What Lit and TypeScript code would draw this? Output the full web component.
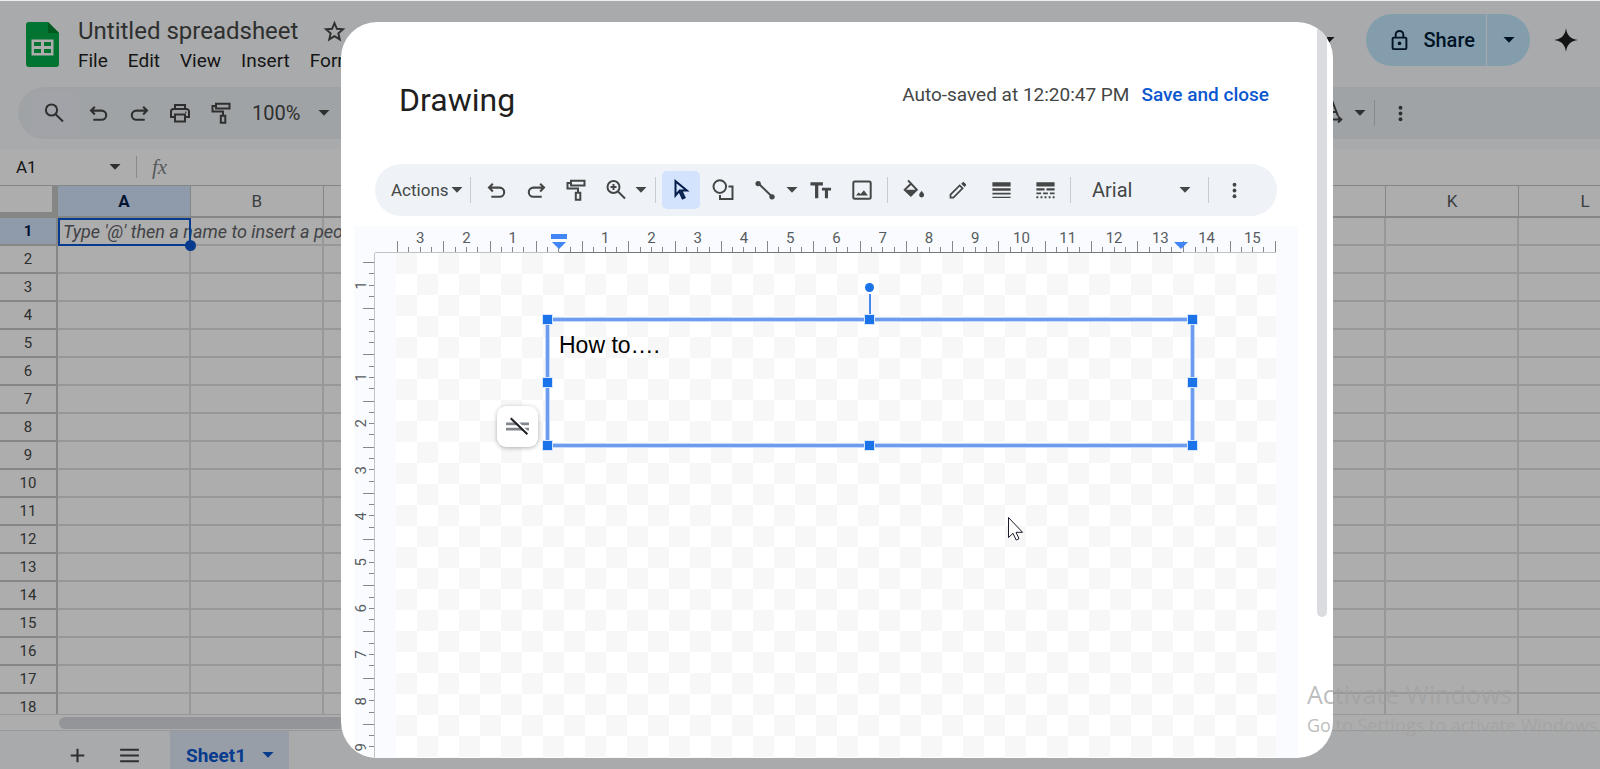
import { LitElement, html, css, svg, nothing } from "lit";
import { customElement } from "lit/decorators.js";

const glyphs: Record<string, unknown> = {
  search: svg`<circle cx="9.5" cy="9" r="5.6"/><path d="M13.6 13.2 21 20.5"/>`,
  undo: svg`<path d="M8.5 5.5 4.8 9.2l3.7 3.7M5 9.2h10a4 4 0 0 1 0 8.8H7"/>`,
  redo: svg`<path d="M15.5 5.5l3.7 3.7-3.7 3.7M19 9.2H9a4 4 0 0 0 0 8.8h8"/>`,
  print: svg`<path d="M7 8V4h10v4M7 16H3v-5.500a2.500 2.500 0 0 1 2.500-2.500h13a2.500 2.500 0 0 1 2.500 2.500V16h-4M7 13.500h10V20.500H7z"/><circle class="solid" cx="17.800" cy="11.200" r=".8"/>`,
  paint: svg`<path d="M7 2.800h13.500v4.700H7zM7 5H3.500v5.500h10.500v4M11.800 14.800h4.500v7h-4.500z"/>`,
  zoom: svg`<circle cx="9.500" cy="9" r="6"/><path d="M14 13.500l7 7M9.500 6v6M6.500 9h6"/>`,
  pointer: svg`<path d="M6.500 3.200v14.300l3.700-4.300 3.400 7.300 2-1-3.400-7.100h5.600z"/>`,
  shapes: svg`<circle cx="8.800" cy="8.600" r="6.300"/><path d="M17.500 8.500h4v12.500H9v-4"/>`,
  line: svg`<path d="M4.500 4.500l14.500 14"/><circle class="solid" cx="4.300" cy="4.800" r="2.800"/><circle class="solid" cx="18.800" cy="18.600" r="2.800"/>`,
  textbox: svg`<path class="solid" d="M1.500 3.500h13v3.200H9.700V20H6.300V6.700H1.500zM13.500 9h9.500v3h-3.200v8h-3.200v-8h-3.100z"/>`,
  image: svg`<rect x="3.300" y="3.600" width="17.400" height="17.200" rx="1.500"/><path class="solid" d="M6 17.500l2.500-3 2.200 1.600 3.200-3.800 4 5.200z"/>`,
  fill: svg`<path d="M6.300 1.500l9.200 9.700-6.300 6.300-6.400-6.300 6.300-6"/><path class="solid" d="M3 11.200h12.200l-6 6zM20.500 12.500s-2.600 2.600-2.600 4.300a2.600 2.600 0 0 0 5.200 0c0-1.700-2.600-4.300-2.600-4.300z"/>`,
  pencil: svg`<path d="M4 20v-3.300L14.500 6.200l3.300 3.300L7.300 20z"/><path class="solid" d="M16.200 4.300l1.600-1.500c.6-.5 1.300-.5 1.800 0l1.900 1.900c.5.500.5 1.200 0 1.800l-1.500 1.500z"/>`,
  weight: svg`<path class="solid" d="M2.500 3.500h19v4.300h-19zM2.500 9.600h19v2.700h-19zM2.500 14.300h19v2h-19zM2.500 18.500h19v1.200h-19z"/>`,
  dash: svg`<path class="solid" d="M2.500 3.500h19v4.300h-19zM2.500 9.600h8.500v2.500H2.500zM13 9.600h8.500v2.500H13zM2.500 14h5v2h-5zM9.500 14h5v2h-5zM16.500 14h5v2h-5zM2.500 18h2v2h-2zM6.800 18h2v2h-2zM11 18h2v2h-2zM15.300 18h2v2h-2zM19.500 18h2v2h-2z"/>`,
  more: svg`<circle class="solid" cx="12" cy="6" r="2"/><circle class="solid" cx="12" cy="12" r="2"/><circle class="solid" cx="12" cy="18" r="2"/>`,
  caret: svg`<path class="solid" d="M6.500 9h11L12 14.800z"/>`,
  star: svg`<path d="M12 3.200l2.500 6 6.400.5-4.900 4.200 1.500 6.300-5.500-3.400-5.500 3.400L8 13.900 3.100 9.700l6.400-.5z"/>`,
  lock: svg`<rect x="4.800" y="9" width="14.400" height="12" rx="1.200"/><path d="M8 9V6a4 4 0 0 1 8 0v3"/><circle class="solid" cx="12" cy="15" r="1.900"/>`,
  spark: svg`<path class="solid" d="M12 0c1 7.500 4.500 11 12 12-7.500 1-11 4.500-12 12-1-7.500-4.500-11-12-12 7.500-1 11-4.500 12-12z"/>`,
  rotate: svg`<path d="M6.500 15 12 2l5 13M8 11h8M3 18.500h17M17 15.500l3.300 3-3.300 3"/>`,
  plus: svg`<path d="M12 5.500v13M5.500 12h13"/>`,
  lines: svg`<path d="M3 6.500h18M3 12h18M3 17.500h18"/>`,
  nofit: svg`<path class="soft" d="M1 9.500h22M1 14.500h22"/><path class="gap" d="M8 3.500l14.500 15"/><path d="M5.500 4l16 15.500"/>`,
};

const icon = (name: string, size = 24) => html`<svg
  class="icon"
  viewBox="0 0 24 24"
  width=${size}
  height=${size}
  aria-hidden="true"
>${glyphs[name]}</svg>`;

const iconStyles = css`
  * { box-sizing: border-box; }
  .icon { display: block; flex: none; fill: none; stroke: currentColor; stroke-width: 2; }
  .solid { fill: currentColor; stroke: none; }
  button, input, select { font: inherit; color: inherit; border: 0; background: none; padding: 0; margin: 0; outline: 0; }
  .tool { display: flex; align-items: center; justify-content: center; width: 38px; height: 38px; border-radius: 5px; }
  .drop { display: flex; align-items: center; justify-content: center; width: 16px; height: 38px; }
  .rule { width: 1px; height: 26px; background: #c7cace; margin: 0 6px; flex: none; }
`;

@customElement("sheet-page")
class SheetPage extends LitElement {
  static styles = [iconStyles, css`
    :host { display: flex; flex-direction: column; height: 100%; overflow: hidden; background: #f9fbfd; color: #1f1f1f; font-family: Roboto, sans-serif; }
    .top { display: flex; height: 86px; flex: none; padding: 0 22px 0 26px; }
    .logo { margin-top: 21px; flex: none; }
    .names { display: flex; flex-direction: column; margin: 13px 0 0 19px; }
    .title-row { display: flex; align-items: center; height: 34px; gap: 10px; color: #444746; }
    .title { width: 235px; font-size: 24px; }
    .menus { display: flex; gap: 20px; font-size: 19px; line-height: 26px; }
    .actions { display: flex; align-items: center; height: 52px; margin: 13px 0 0 auto; }
    .share { display: flex; height: 52px; margin: 0 24px 0 29px; color: #001d35; font-size: 20px; font-weight: 500; }
    .share-main { display: flex; align-items: center; gap: 12px; padding: 0 11px 0 22px; background: #c2e7ff; border-radius: 26px 0 0 26px; }
    .share-more { display: flex; align-items: center; justify-content: center; width: 43px; margin-left: 1px; background: #c2e7ff; border-radius: 0 26px 26px 0; }
    .bar { display: flex; align-items: center; height: 52px; flex: none; margin-left: 18px; padding: 0 181px 0 12px; background: #ecf1f5; border-radius: 26px 0 0 26px; color: #444746; }
    .find { width: 48px; height: 44px; background: #eef0fa; }
    .set { display: flex; gap: 3px; margin-left: 1px; }
    .zoom { width: 76px; padding-left: 12px; font-size: 20px; }
    .end { display: flex; align-items: center; margin-left: auto; }
    .formula { display: flex; align-items: center; height: 36px; flex: none; margin-top: 10px; background: #fff; color: #444746; }
    .name { width: 107px; padding-left: 16px; font-size: 17px; color: #1f1f1f; }
    .formula .rule { height: 22px; margin: 0 15px 0 13px; }
    .fx { font: italic 21px "Liberation Serif", serif; color: #80868b; }
    .grid { flex: 1; min-height: 0; overflow: hidden; background: #fff; border-top: 1px solid #c4c7c5; }
    table { border-collapse: separate; border-spacing: 0; table-layout: fixed; width: 1652px; }
    col.nums { width: 58px; }
    th, td { padding: 0; font-weight: 400; height: 28px; overflow: visible; white-space: nowrap; }
    thead th { height: 32px; border-right: 1px solid #c4c7c5; border-bottom: 2px solid #c4c7c5; font-size: 17px; color: #575b5f; }
    tbody th { border-right: 2px solid #c4c7c5; border-bottom: 2px solid #c4c7c5; font-size: 15px; color: #444746; }
    td { border-right: 2px solid #e0e0e0; border-bottom: 2px solid #e0e0e0; }
    thead .corner { border-right: 6px solid #c4c7c5; border-bottom: 6px solid #c4c7c5; }
    thead .on, tbody .on { background: #d3e3fd; color: #041e49; font-weight: 700; }
    .picked { position: relative; }
    .hint { display: block; width: 132px; padding: 2px 0 0 5px; font: italic 18px/24px Roboto, sans-serif; color: #5f6368; }
    .frame { position: absolute; inset: 0 -2px -2px 0; border: 2px solid #0b57d0; }
    .frame::after { content: ""; position: absolute; right: -7px; bottom: -7px; width: 11px; height: 11px; border-radius: 50%; background: #0b57d0; }
    .scroll { display: flex; align-items: center; height: 17px; flex: none; padding-left: 59px; background: #fff; border-top: 1px solid #e0e0e0; border-bottom: 1px solid #e0e0e0; }
    .thumb { width: 820px; height: 12px; border-radius: 6px; background: #dadce0; }
    .tabs { display: flex; align-items: center; height: 38px; flex: none; padding-left: 58px; background: #f9fbfd; color: #444746; }
    .tabs .tool { margin-top: 10px; }
    .tabs .tool + .tool { margin-left: 14px; }
    .sheet { display: flex; align-items: center; gap: 10px; height: 38px; margin-left: 22px; padding: 10px 9px 0 16px; background: #e1e9f7; color: #0b57d0; font-size: 19px; font-weight: 700; }
  `];

  render() {
    const cols = [..."ABCDEFGHIJKL"];
    return html`
      <header class="top">
        <svg class="logo" width="33" height="45" viewBox="0 0 33 45" aria-hidden="true">
          <path fill="#00ac47" d="M3 0h19l11 11v31a3 3 0 0 1-3 3H3a3 3 0 0 1-3-3V3a3 3 0 0 1 3-3z"/>
          <path fill="#00832d" d="M22 0l11 11H22z"/>
          <path fill="#fff" fill-rule="evenodd" d="M5.500 17.500h22v16h-22zM8 20v4h7v-4zM18 20v4h7v-4zM8 27v4h7v-4zM18 27v4h7v-4z"/>
        </svg>
        <div class="names">
          <div class="title-row">
            <input class="title" aria-label="Document title" .value=${"Untitled spreadsheet"} />
            <button aria-label="Star">${icon("star", 23)}</button>
          </div>
          <nav class="menus">
            ${["File", "Edit", "View", "Insert", "Format"].map((m) => html`<button>${m}</button>`)}
          </nav>
        </div>
        <div class="actions">
          <button class="drop" aria-label="Call options">${icon("caret")}</button>
          <div class="share">
            <button class="share-main">${icon("lock", 23)}Share</button>
            <button class="share-more" aria-label="Share options">${icon("caret")}</button>
          </div>
          <button aria-label="Assistant">${icon("spark", 24)}</button>
        </div>
      </header>
      <div class="bar">
        <button class="tool find" aria-label="Search the menus">${icon("search", 24)}</button>
        <div class="set">
          <button class="tool" aria-label="Undo">${icon("undo", 25)}</button>
          <button class="tool" aria-label="Redo">${icon("redo", 25)}</button>
          <button class="tool" aria-label="Print">${icon("print", 24)}</button>
          <button class="tool" aria-label="Paint format">${icon("paint", 24)}</button>
        </div>
        <input class="zoom" aria-label="Zoom" .value=${"100%"} />
        <button class="drop" aria-label="Zoom options">${icon("caret")}</button>
        <div class="end">
          <button class="tool" aria-label="Text rotation">${icon("rotate", 24)}</button>
          <button class="drop" aria-label="Rotation options">${icon("caret")}</button>
          <span class="rule"></span>
          <button class="tool" aria-label="More">${icon("more", 23)}</button>
        </div>
      </div>
      <div class="formula">
        <input class="name" aria-label="Name box" .value=${"A1"} />
        <button class="drop" aria-label="Named ranges">${icon("caret")}</button>
        <span class="rule"></span>
        <span class="fx">fx</span>
      </div>
      <div class="grid">
        <table>
          <colgroup><col class="nums" />${cols.map(() => html`<col />`)}</colgroup>
          <thead>
            <tr>
              <th class="corner"></th>
              ${cols.map((c, i) => html`<th class=${i ? "" : "on"}>${c}</th>`)}
            </tr>
          </thead>
          <tbody>
            ${Array.from({ length: 18 }, (_, r) => html`<tr>
              <th class=${r ? "" : "on"}>${r + 1}</th>
              ${cols.map((_, c) => r === 0 && c === 0
                ? html`<td class="picked"><span class="hint">Type '@' then a name to insert a people smart chip</span><span class="frame"></span></td>`
                : html`<td></td>`)}
            </tr>`)}
          </tbody>
        </table>
      </div>
      <div class="scroll"><div class="thumb"></div></div>
      <footer class="tabs">
        <button class="tool" aria-label="Add sheet">${icon("plus", 25)}</button>
        <button class="tool" aria-label="All sheets">${icon("lines", 25)}</button>
        <button class="sheet">Sheet1 ${icon("caret")}</button>
      </footer>
    `;
  }
}

@customElement("drawing-dialog")
class DrawingDialog extends LitElement {
  static styles = [iconStyles, css`
    :host { display: flex; height: 100%; overflow: hidden; background: #fff; border-radius: 36px; color: #444746; font-family: Roboto, sans-serif; }
    .main { flex: 1; min-width: 0; display: flex; flex-direction: column; padding-left: 13px; }
    .head { display: flex; justify-content: space-between; align-items: flex-start; height: 142px; flex: none; padding: 0 29px 0 45px; }
    h1 { margin: 58px 0 0; font-size: 32px; line-height: 40px; font-weight: 400; color: #1f1f1f; }
    .status { display: flex; gap: 12px; margin-top: 60px; font-size: 19px; line-height: 26px; }
    .save { color: #0b57d0; font-weight: 500; }
    .bar { display: flex; align-items: center; height: 52px; flex: none; margin: 0 21px; padding-left: 16px; background: #eff3f8; border-radius: 26px; }
    .menu { display: flex; align-items: center; width: 73px; font-size: 17px; }
    .set { display: flex; }
    .set .drop { margin-left: -4px; }
    .g1 { gap: 2px; }
    .g2 { gap: 4px; }
    .g2 .drop { margin-right: -3px; }
    .g3 { gap: 6px; }
    .active { background: #d3e3fd; color: #041e49; }
    .font { position: relative; display: flex; align-items: center; width: 125px; }
    .font select { appearance: none; width: 100%; height: 38px; padding-left: 15px; font-size: 20px; }
    .font .icon { position: absolute; right: 5px; pointer-events: none; }
    .work { flex: 1; min-height: 0; display: grid; grid-template: 27px 1fr / 21px 1fr; margin-top: 10px; background: #f9fbfe; overflow: hidden; }
    .across { grid-column: 2; position: relative; display: grid; grid-auto-flow: column; grid-auto-columns: 1fr; padding-left: 22px; margin-right: 22px; border-bottom: 1px solid #c0c3c6; font-size: 15px; line-height: 16px; color: #575b5f; }
    .h { text-align: center; padding-top: 4px; background:
      linear-gradient(#85888b, #85888b) 0 100% / 1px 11px no-repeat,
      linear-gradient(#85888b, #85888b) 25% 100% / 1px 5px no-repeat,
      linear-gradient(#85888b, #85888b) 50% 100% / 1px 5px no-repeat,
      linear-gradient(#85888b, #85888b) 75% 100% / 1px 5px no-repeat; }
    .h:nth-child(19) { border-right: 1px solid #85888b; border-image: linear-gradient(transparent 15px, #85888b 0) 1; }
    .span { position: absolute; left: 184px; right: 95px; bottom: -1px; height: 1px; background: #757779; }
    .mark { position: absolute; bottom: 3px; display: block; }
    .left { left: 176px; }
    .right { right: 87px; }
    .down { grid-row: 2; grid-column: 1; display: grid; grid-auto-rows: 1fr; height: 517px; padding-top: 9px; border-right: 1px solid #c0c3c6; font-size: 15px; color: #575b5f; }
    .v { display: flex; align-items: center; background:
      linear-gradient(#85888b, #85888b) 100% 0 / 11px 1px no-repeat,
      linear-gradient(#85888b, #85888b) 100% 25% / 5px 1px no-repeat,
      linear-gradient(#85888b, #85888b) 100% 50% / 5px 1px no-repeat,
      linear-gradient(#85888b, #85888b) 100% 75% / 5px 1px no-repeat; }
    .v span { writing-mode: vertical-rl; transform: rotate(180deg); line-height: 14px; }
    .stage { grid-row: 2; grid-column: 2; position: relative; margin: 0 22px 0 21px; background: repeating-conic-gradient(#fff 0 25%, #f7f7f7 0 50%) 0 0 / 42px 42px; overflow: hidden; }
    .box { position: absolute; left: 149px; top: 64px; right: 81px; height: 131px; border: 5px solid #c5d9fb; padding: 9px; color: #000; font: 23px/28px "Liberation Sans", Arial, sans-serif; }
    .box::before { content: ""; position: absolute; inset: -4px; border: 3px solid #6b9cf0; }
    .grip { position: absolute; width: 11px; height: 11px; margin: -6px; background: #1a73e8; border: 1px solid #d6e4fc; }
    .t { top: -2px; } .m { top: 50%; } .b { top: calc(100% + 3px); }
    .l { left: -2px; } .c { left: 50%; } .r { left: calc(100% + 3px); }
    .stem { position: absolute; left: 50%; top: -28px; width: 2px; height: 20px; margin-left: -1px; background: #4a87ee; }
    .turn { position: absolute; left: 50%; top: -39px; width: 9px; height: 9px; margin-left: -5px; border-radius: 50%; background: #1a73e8; }
    .fit { position: absolute; left: 101px; top: 153px; width: 41px; height: 41px; display: flex; align-items: center; justify-content: center; background: #fff; border-radius: 9px; box-shadow: 0 1px 4px rgba(60, 64, 67, .4); color: #202124; }
    .soft { stroke: #80868b; stroke-width: 2.500; }
    .gap { stroke: #fff; }
    .cursor { position: absolute; left: 611px; top: 263px; }
    .rail { flex: none; width: 35px; padding: 6px 0 0 19px; }
    .thumb { width: 10px; height: 589px; background: #dadce0; border-radius: 0 0 5px 5px; }
  `];

  tool(name: string, label: string, size = 24, extra = "") {
    return html`<button class="tool ${extra}" aria-label=${label}>${icon(name, size)}</button>`;
  }

  render() {
    const across = Array.from({ length: 19 }, (_, i) => Math.abs(i - 3));
    const down = Array.from({ length: 11 }, (_, i) => Math.abs(i - 1));
    const drop = (label: string) => html`<button class="drop" aria-label=${label}>${icon("caret")}</button>`;
    return html`
      <div class="main">
        <div class="head">
          <h1>Drawing</h1>
          <div class="status"><span>Auto-saved at 12:20:47 PM</span><button class="save">Save and close</button></div>
        </div>
        <div class="bar">
          <button class="menu">Actions<svg class="icon" width="16" height="24" viewBox="4 0 16 24">${glyphs.caret}</svg></button>
          <span class="rule"></span>
          <div class="set g1">
            ${this.tool("undo", "Undo", 25)}${this.tool("redo", "Redo", 25)}${this.tool("paint", "Paint format")}${this.tool("zoom", "Zoom")}${drop("Zoom options")}
          </div>
          <span class="rule"></span>
          <div class="set g2">
            ${this.tool("pointer", "Select", 24, "active")}${this.tool("shapes", "Shape")}${this.tool("line", "Line", 23)}${drop("Line options")}${this.tool("textbox", "Text box", 23)}${this.tool("image", "Image", 24)}
          </div>
          <span class="rule"></span>
          <div class="set g3">
            ${this.tool("fill", "Fill color", 23)}${this.tool("pencil", "Border color", 21)}${this.tool("weight", "Border weight", 23)}${this.tool("dash", "Border dash", 23)}
          </div>
          <span class="rule"></span>
          <label class="font"><select aria-label="Font"><option>Arial</option></select>${icon("caret")}</label>
          <span class="rule"></span>
          ${this.tool("more", "More", 23)}
        </div>
        <div class="work">
          <div class="across">
            ${across.map((n) => html`<div class="h">${n || nothing}</div>`)}
            <span class="span"></span>
            <svg class="mark left" width="16" height="15" viewBox="0 0 16 15"><path fill="#4285f4" d="M0 0h16v5H0zM1 8h14l-7 7z"/></svg>
            <svg class="mark right" width="16" height="15" viewBox="0 0 16 15"><path fill="#4285f4" d="M1 8h14l-7 7z"/></svg>
          </div>
          <div class="down">${down.map((n) => html`<div class="v"><span>${n || nothing}</span></div>`)}</div>
          <div class="stage">
            <div class="box">
              How to….
              <span class="stem"></span><span class="turn"></span>
              ${["t l", "t c", "t r", "m l", "m r", "b l", "b c", "b r"].map((p) => html`<span class="grip ${p}"></span>`)}
            </div>
            <button class="fit" aria-label="Do not autofit">${icon("nofit", 25)}</button>
            <svg class="cursor" width="18" height="26" viewBox="0 0 18 26"><path fill="#fff" stroke="#1b1b2b" d="M1.500 1.500v20l4.500-4.200 3.200 6.700 2.800-1.300L9 16.300h6.500z"/></svg>
          </div>
        </div>
      </div>
      <div class="rail"><div class="thumb"></div></div>
    `;
  }
}

@customElement("app-root")
class AppRoot extends LitElement {
  static styles = css`
    :host { display: block; position: relative; height: 100vh; overflow: hidden; box-sizing: border-box; border-top: 1px solid #eeeef2; }
    .shade { position: absolute; inset: 0; box-sizing: border-box; padding: 21px 267px 11px 341px; background: rgba(0, 0, 0, .32); }
    .notice { position: absolute; left: calc(100% - 293px); bottom: 30px; white-space: nowrap; font-family: "Open Sans", "Noto Sans", sans-serif; color: rgba(160, 160, 160, .7); font-size: 18px; line-height: 28px; pointer-events: none; }
    .notice strong { display: block; font-size: 25px; line-height: 34px; font-weight: 400; }
  `;

  render() {
    return html`
      <sheet-page></sheet-page>
      <div class="shade"><drawing-dialog role="dialog" aria-label="Drawing"></drawing-dialog></div>
      <div class="notice"><strong>Activate Windows</strong>Go to Settings to activate Windows.</div>
    `;
  }
}
